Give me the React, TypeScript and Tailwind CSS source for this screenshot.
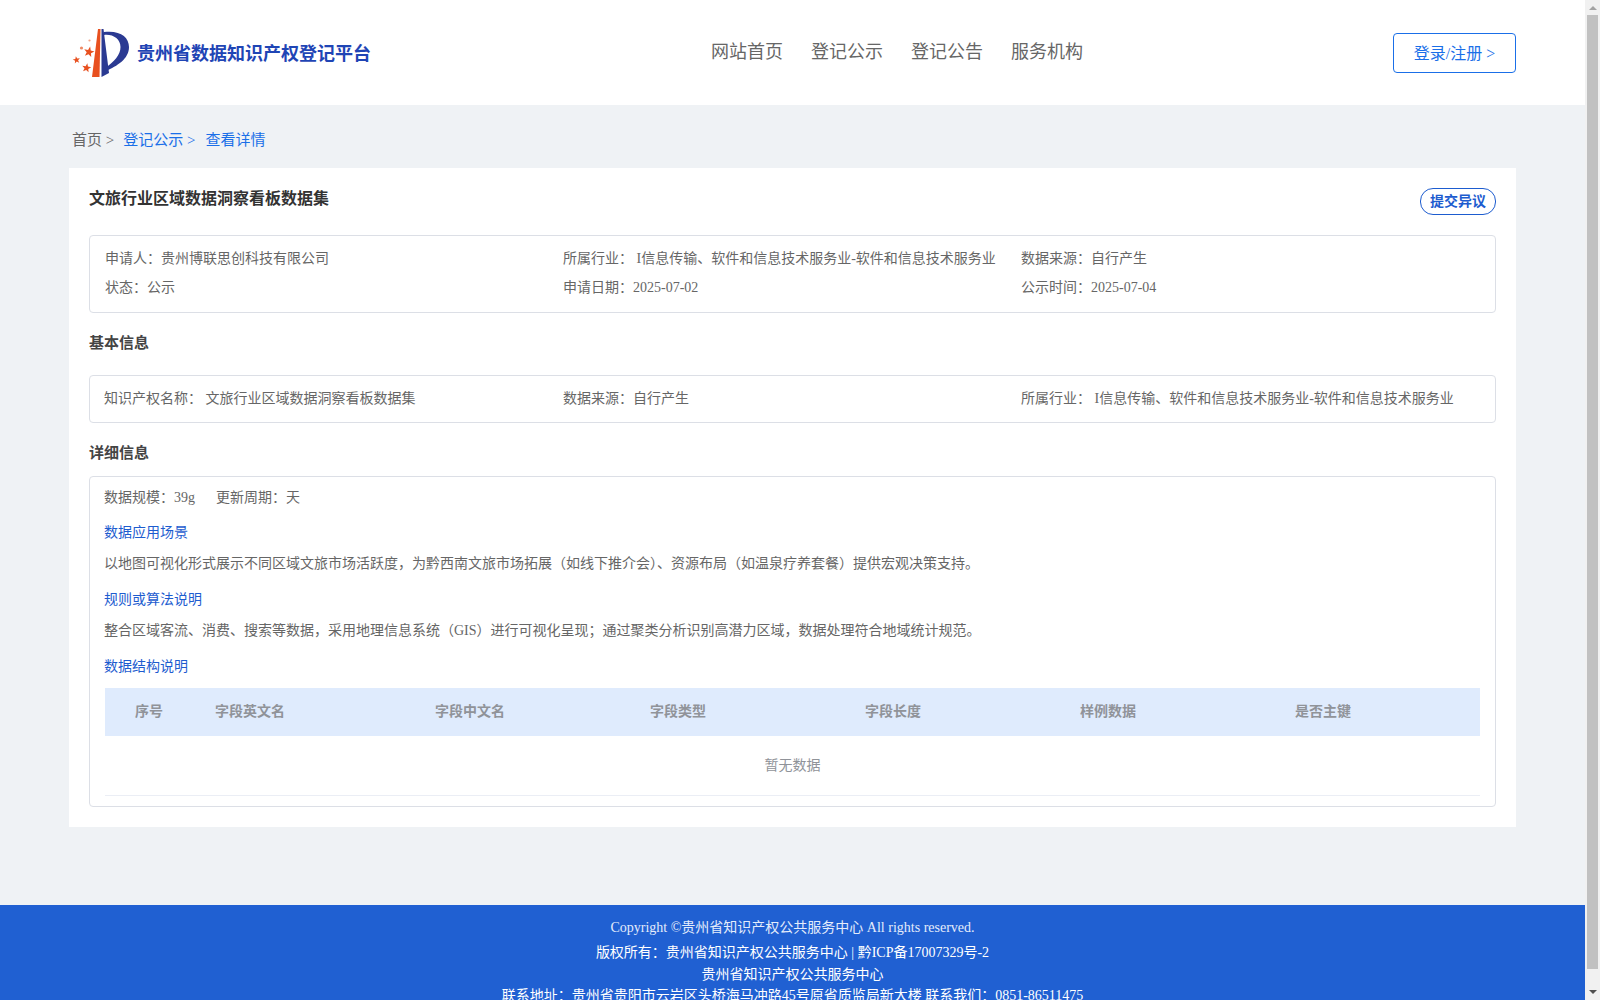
const FONT = "font-['Liberation_Serif','Noto_Sans_CJK_SC',serif]";

function starPoints(cx: number, cy: number, r: number, rot = 0) {
  const pts: string[] = [];
  for (let i = 0; i < 10; i++) {
    const rad = i % 2 === 0 ? r : r * 0.42;
    const a = (-90 + rot + i * 36) * (Math.PI / 180);
    pts.push(`${(cx + rad * Math.cos(a)).toFixed(2)},${(cy + rad * Math.sin(a)).toFixed(2)}`);
  }
  return pts.join(' ');
}

function Logo() {
  return (
    <svg width="60" height="52" viewBox="0 0 60 52" className="shrink-0">
      <path d="M26 2 L28.5 2 L27.5 50 L20 50 Z" fill="#e8501f" />
      <path d="M29.5 2 L31.5 2 L37 46 L29.5 50 Z" fill="#2b3a92" />
      <path
        d="M32 5 C48 3 57 10 57 20 C57 32 45 39 34 44 L33 41 C42 35 48.5 28 48.5 20 C48.5 12 41 7 32 8 Z"
        fill="#2b3a92"
      />
      <polygon points={starPoints(17, 25, 5.5, 12)} fill="#e8501f" />
      <polygon points={starPoints(4.5, 33, 3.8, -10)} fill="#e8501f" />
      <polygon points={starPoints(14.5, 41, 4.8, 10)} fill="#e8501f" />
      <circle cx="9.5" cy="21" r="1.6" fill="#ee8a66" />
      <circle cx="17.5" cy="13.5" r="1.1" fill="#f0a488" />
    </svg>
  );
}

function Field({ children }: { children: React.ReactNode }) {
  return <div className="h-[29px] flex items-center whitespace-nowrap">{children}</div>;
}

const columns = ['字段英文名', '字段中文名', '字段类型', '字段长度', '样例数据', '是否主键'];
const industry = 'I信息传输、软件和信息技术服务业-软件和信息技术服务业';

export default function App() {
  return (
    <div className={`${FONT} h-screen w-full flex overflow-hidden bg-[#eff2f5] text-[14px] text-[#666]`}>
      <div className="flex-1 min-w-0 flex flex-col">
        {/* header */}
        <header className="h-[105px] shrink-0 bg-white flex items-center pl-[72px] pr-[69px]">
          <div className="w-[639px] shrink-0 flex items-center gap-[5px]">
            <Logo />
            <span className="mt-[4px] text-[18px] font-bold text-[#1f45b5] whitespace-nowrap">贵州省数据知识产权登记平台</span>
          </div>
          <nav className="flex gap-[28px] text-[18px] text-[#666] -mt-[1px]">
            <span>网站首页</span>
            <span>登记公示</span>
            <span>登记公告</span>
            <span>服务机构</span>
          </nav>
          <button className="ml-auto w-[123px] h-[40px] pt-[1px] border border-[#1a6fe8] rounded-[4px] text-[16px] text-[#1a6fe8] bg-white mt-[1px]">
            登录/注册 &gt;
          </button>
        </header>

        {/* breadcrumb */}
        <div className="h-[63px] shrink-0 flex items-center pl-[72px] pt-[7px] text-[15px] whitespace-nowrap">
          <span className="mr-[9px]">首页 &gt;</span>
          <span className="mr-[10px] text-[#1a6fe8]">登记公示 &gt;</span>
          <span className="text-[#1a6fe8]">查看详情</span>
        </div>

        {/* card */}
        <main className="mx-[69px] shrink-0 bg-white px-5 pt-5 pb-[20px]">
          <div className="h-[47px] flex items-start justify-between">
            <h1 className="text-[16px] leading-[22px] font-bold text-[#333]">文旅行业区域数据洞察看板数据集</h1>
            <button className="w-[76px] h-[27px] rounded-[13px] border border-[#1d5ccf] text-[14px] font-bold text-[#1d5ccf]">
              提交异议
            </button>
          </div>

          <div className="border border-[#dcdfe6] rounded-[4px] pl-[15px] pr-[15px] pt-[8px] pb-[10px] grid grid-cols-[458px_458px_1fr]">
            <Field>{'申请人\uFF1A贵州博联思创科技有限公司'}</Field>
            <Field>{`所属行业\uFF1A ${industry}`}</Field>
            <Field>{'数据来源\uFF1A自行产生'}</Field>
            <Field>{'状态\uFF1A公示'}</Field>
            <Field>{'申请日期\uFF1A2025-07-02'}</Field>
            <Field>{'公示时间\uFF1A2025-07-04'}</Field>
          </div>

          <h2 className="h-[62px] flex items-center pb-[2px] text-[15px] font-bold text-[#444]">基本信息</h2>

          <div className="h-[48px] pb-[1px] border border-[#dcdfe6] rounded-[4px] pl-[14px] pr-[14px] grid grid-cols-[459px_458px_1fr] items-center whitespace-nowrap">
            <div>{'知识产权名称\uFF1A 文旅行业区域数据洞察看板数据集'}</div>
            <div>{'数据来源\uFF1A自行产生'}</div>
            <div>{`所属行业\uFF1A ${industry}`}</div>
          </div>

          <h2 className="h-[53px] flex items-center pt-[7px] text-[15px] font-bold text-[#444]">详细信息</h2>

          <div className="border border-[#dcdfe6] rounded-[4px] px-[14px] pt-[11px] pb-[10px] leading-[20px]">
            <div className="flex gap-[21px]">
              <span>{'数据规模\uFF1A39g'}</span>
              <span>{'更新周期\uFF1A天'}</span>
            </div>
            <div className="mt-[15px] text-[#1d5ccf]">数据应用场景</div>
            <p className="mt-[11px]">
              {'以地图可视化形式展示不同区域文旅市场活跃度\uFF0C为黔西南文旅市场拓展\uFF08如线下推介会\uFF09、资源布局\uFF08如温泉疗养套餐\uFF09提供宏观决策支持。'}
            </p>
            <div className="mt-[16px] text-[#1d5ccf]">规则或算法说明</div>
            <p className="mt-[11px]">
              {'整合区域客流、消费、搜索等数据\uFF0C采用地理信息系统\uFF08GIS\uFF09进行可视化呈现\uFF1B通过聚类分析识别高潜力区域\uFF0C数据处理符合地域统计规范。'}
            </p>
            <div className="mt-[16px] text-[#1d5ccf]">数据结构说明</div>

            <div className="mx-px mt-[11px] h-[48px] bg-[#dfebfd] grid grid-cols-[110px_220px_215px_215px_215px_215px_1fr] items-center font-bold text-[#909399]">
              <div className="pl-[30px]">序号</div>
              {columns.map(c => (
                <div key={c}>{c}</div>
              ))}
            </div>
            <div className="mx-px h-[60px] border-b border-[#ebeef5] flex items-center justify-center text-[#909399]">暂无数据</div>
          </div>
        </main>

        {/* footer */}
        <footer className="mt-[78px] shrink-0 bg-[#2060d2] pt-[12px] text-center text-[14px] leading-[21px] text-white whitespace-nowrap">
          <div className="mb-[4px] text-[#e4ecfb]">Copyright ©贵州省知识产权公共服务中心 All rights reserved.</div>
          <div className="mb-[1px]">{'版权所有\uFF1A贵州省知识产权公共服务中心 | 黔ICP备17007329号-2'}</div>
          <div>贵州省知识产权公共服务中心</div>
          <div>{'联系地址\uFF1A贵州省贵阳市云岩区头桥海马冲路45号原省质监局新大楼 联系我们\uFF1A0851-86511475'}</div>
        </footer>
      </div>

      {/* page scrollbar */}
      <div className="w-[15px] shrink-0 bg-[#f1f1f1] flex flex-col items-center">
        <div className="h-[15px] w-full flex items-center justify-center">
          <div className="w-0 h-0 border-x-[4px] border-x-transparent border-b-[4px] border-b-[#a3a3a3]" />
        </div>
        <div className="w-[11px] h-[954px] bg-[#c1c1c1]" />
        <div className="flex-1 w-full flex items-end justify-center pb-[6px]">
          <div className="w-0 h-0 border-x-[4px] border-x-transparent border-t-[4px] border-t-[#505050]" />
        </div>
      </div>
    </div>
  );
}
